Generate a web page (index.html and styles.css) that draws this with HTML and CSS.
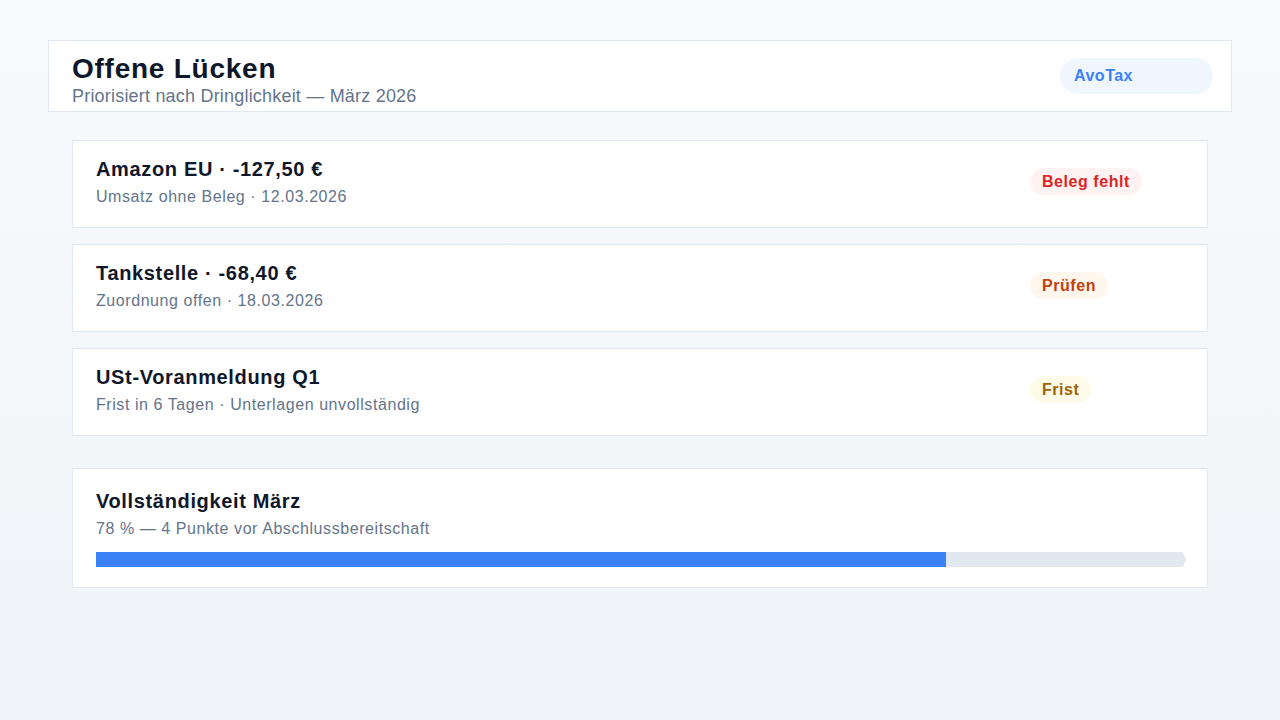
FILE: index.html
```html
<!DOCTYPE html>
<html lang="de">
<head>
    <meta charset="UTF-8">
    <title>Offene Lücken</title>
    <link rel="stylesheet" href="styles.css">
</head>
<body>
<div class="page">
    <!--Kopfbereich-->
    <div class="header">
        <div class="header-text">
            <h1>Offene Lücken</h1>
            <p>Priorisiert nach Dringlichkeit — März 2026</p>
        </div>
        <span class="brand">AvoTax</span>
    </div>

    <!--Liste der offenen Punkte-->
    <div class="gap-list">
        <div class="gap-item">
            <div class="gap-text">
                <h2>Amazon EU · -127,50 €</h2>
                <p>Umsatz ohne Beleg · 12.03.2026</p>
            </div>
            <div class="gap-side">
                <span class="tag tag-red">Beleg fehlt</span>
            </div>
        </div>
        <div class="gap-item">
            <div class="gap-text">
                <h2>Tankstelle · -68,40 €</h2>
                <p>Zuordnung offen · 18.03.2026</p>
            </div>
            <div class="gap-side">
                <span class="tag tag-orange">Prüfen</span>
            </div>
        </div>
        <div class="gap-item">
            <div class="gap-text">
                <h2>USt-Voranmeldung Q1</h2>
                <p>Frist in 6 Tagen · Unterlagen unvollständig</p>
            </div>
            <div class="gap-side">
                <span class="tag tag-yellow">Frist</span>
            </div>
        </div>
    </div>

    <!--Fortschritt-->
    <div class="progress-card">
        <h2>Vollständigkeit März</h2>
        <p>78 % — 4 Punkte vor Abschlussbereitschaft</p>
        <div class="bar">
            <div class="bar-fill" style="width: 78%"></div>
        </div>
    </div>
</div>
</body>
</html>
```

FILE: styles.css
```css
html, body {
    margin: 0;
    padding: 0;
}
body {
    min-height: 720px;
    background: linear-gradient(to bottom, #f8fafc, #f0f4f8);
    font-family: "Liberation Sans", Arial, sans-serif;
    color: #0f172a;
}
h1, h2, p {
    margin: 0;
}
.page {
    padding: 40px 48px;
}
.header {
    display: flex;
    align-items: center;
    justify-content: space-between;
    background-color: white;
    box-shadow: inset 0 0 0 1px #e2e8f0;
    padding: 12px 19px 6px 24px;
}
.header h1 {
    font-size: 28px;
    line-height: 34px;
    font-weight: bold;
    letter-spacing: 0.75px;
}
.header p {
    font-size: 18px;
    line-height: 20px;
    letter-spacing: 0.2px;
    color: #64748b;
}
.brand {
    box-sizing: border-box;
    width: 153px;
    height: 36px;
    line-height: 36px;
    margin-top: -6px;
    padding-left: 14px;
    border-radius: 18px;
    background-color: #eff6ff;
    color: #3b82f6;
    font-size: 16px;
    font-weight: bold;
    letter-spacing: 0.5px;
}
.gap-list {
    display: flex;
    flex-direction: column;
    gap: 16px;
    margin: 28px 24px 0;
}
.gap-item {
    display: flex;
    align-items: center;
    background-color: white;
    box-shadow: inset 0 0 0 1px #e2e8f0;
    padding: 17px 24px 20px;
}
.gap-text {
    flex: 1;
}
h2 {
    font-size: 20px;
    line-height: 24px;
    font-weight: bold;
    letter-spacing: 0.65px;
}
.gap-text p, .progress-card p {
    margin-top: 5px;
    font-size: 16px;
    line-height: 22px;
    letter-spacing: 0.57px;
    color: #64748b;
}
.gap-side {
    width: 154px;
}
.tag {
    display: inline-block;
    margin-bottom: 2px;
    padding: 4px 12px;
    line-height: 19px;
    border-radius: 14px;
    font-size: 16px;
    font-weight: bold;
    letter-spacing: 0.55px;
}
.tag-red {
    background-color: #fef2f2;
    color: #dc2626;
}
.tag-orange {
    background-color: #fff7ed;
    color: #c2410c;
}
.tag-yellow {
    background-color: #fefce8;
    color: #a16207;
}
.progress-card {
    margin: 32px 24px 0;
    background-color: white;
    box-shadow: inset 0 0 0 1px #e2e8f0;
    padding: 21px 24px 21px;
}
.bar {
    margin-top: 12px;
    width: calc(100% + 2px);
    height: 15px;
    background-color: #e2e8f0;
    clip-path: polygon(0 0, calc(100% - 3px) 0, 100% 50%, calc(100% - 3px) 100%, 0 100%);
}
.bar-fill {
    height: 100%;
    background-color: #3b82f6;
}
```
